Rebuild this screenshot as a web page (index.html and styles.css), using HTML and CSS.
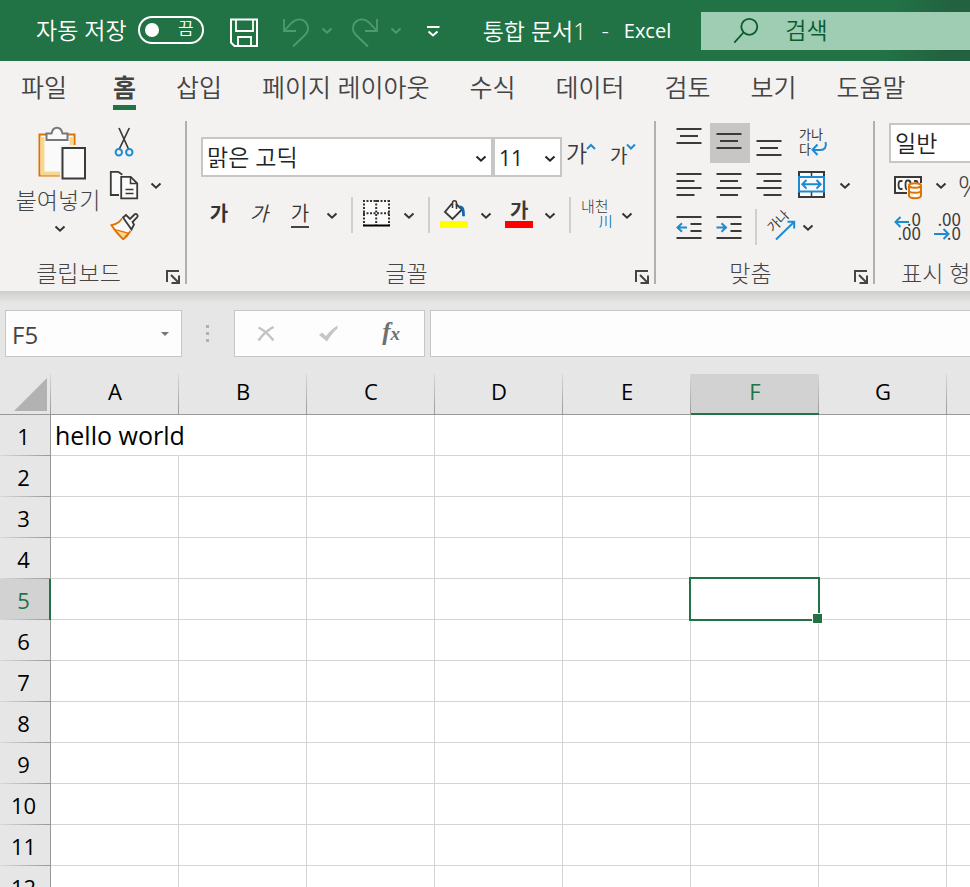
FILE: index.html
```html
<!DOCTYPE html>
<html lang="ko">
<head>
<meta charset="utf-8">
<title>통합 문서1 - Excel</title>
<link rel="stylesheet" href="styles.css">
</head>
<body>
<svg class="defs" aria-hidden="true">
  <symbol id="chev" viewBox="0 0 12 8"><path d="M1.500 1.500 6 5.700l4.500-4.200" fill="none" stroke="currentColor" stroke-width="2"/></symbol>
  <symbol id="launch" viewBox="0 0 14 14"><path d="M1 12V1h12" fill="none" stroke="#444" stroke-width="2"/><path d="M5 5l7 7M13 5.500V13H5.500" fill="none" stroke="#444" stroke-width="2"/></symbol>
</svg>

<header class="titlebar">
  <label class="autosave" for="autosave">자동 저장</label>
  <span class="switch">
    <input type="checkbox" role="switch" id="autosave">
    <span class="switch-state">끔</span>
  </span>
  <button class="tb-btn save" aria-label="저장">
    <svg width="28" height="29" viewBox="230 18 28 29" fill="none" stroke="#fff" stroke-width="2"><path d="M231 19.500h26V46H234.500L231 42.500z"/><path d="M236 20v11h17V20M238 46v-9h13v9" stroke-width="1.800"/></svg>
  </button>
  <button class="tb-btn undo" aria-label="실행 취소">
    <svg width="28" height="30" viewBox="282 18 28 30" fill="none" stroke="#4f9a70" stroke-width="1.800"><path d="M284 19v12h12M284.500 30.500l7.500-8c4-4 10-4 13.500-.5s3.500 9 0 12.500L293 46.500"/></svg>
  </button>
  <button class="tb-btn tb-chev dim" aria-label="실행 취소 목록"><svg width="12" height="8"><use href="#chev"/></svg></button>
  <button class="tb-btn redo" aria-label="다시 실행">
    <svg width="28" height="30" viewBox="351 18 28 30" fill="none" stroke="#4f9a70" stroke-width="1.800"><path d="M377 19v12h-12M376.500 30.500l-7.500-8c-4-4-10-4-13.500-.5s-3.500 9 0 12.500L368 46.500"/></svg>
  </button>
  <button class="tb-btn tb-chev dim" aria-label="다시 실행 목록"><svg width="12" height="8"><use href="#chev"/></svg></button>
  <button class="tb-btn customize" aria-label="빠른 실행 도구 모음 사용자 지정">
    <svg width="14" height="12" viewBox="426 25 14 12" fill="none" stroke="#fff" stroke-width="2"><path d="M427 27h12.500M428.500 31.500l4.500 4 4.500-4"/></svg>
  </button>
  <h1 class="doc-title"><span>통합 문서1</span><span>-</span><span>Excel</span></h1>
  <label class="search">
    <svg width="26" height="28" viewBox="733 17 26 28" fill="none" stroke="#0a5a2c" stroke-width="1.800"><circle cx="749.300" cy="26.800" r="8"/><path d="M743.500 32.500 734.300 42.600"/></svg>
    <input type="search" placeholder="검색" aria-label="검색">
  </label>
</header>

<nav class="tabs">
  <a href="#file">파일</a>
  <a href="#home" class="active" aria-current="page">홈</a>
  <a href="#insert">삽입</a>
  <a href="#layout">페이지 레이아웃</a>
  <a href="#formulas">수식</a>
  <a href="#data">데이터</a>
  <a href="#review">검토</a>
  <a href="#view">보기</a>
  <a href="#help">도움말</a>
</nav>

<section class="ribbon" aria-label="홈">
  <div class="group clipboard">
    <div class="group-body">
      <button class="paste">
        <svg class="pic" width="50" height="56" viewBox="37 126 50 56"><path d="M39.500 135.500h35v41h-35z" fill="#fafafa" stroke="#e07200" stroke-width="2"/><path d="M42.500 138v36.500H61M71.500 138v9" fill="none" stroke="#f8d88e" stroke-width="4"/><path d="M60 146h27v36H60z" fill="#f3f2f1"/><path d="M46.500 134.500h5c.8-3.800 2.800-5.700 5.500-5.700s4.700 1.900 5.500 5.700h5v6.500h-21z" fill="#fafafa" stroke="#777" stroke-width="2"/><path d="M62.500 149h22.500v30.500H62.500z" fill="#fafafa" stroke="#3b3a39" stroke-width="2"/></svg>
        <span>붙여넣기</span>
        <svg class="ch" width="12" height="8"><use href="#chev"/></svg>
      </button>
      <div class="rows">
        <div class="row">
          <button class="ib" aria-label="잘라내기"><svg viewBox="104 123 40 40" fill="none"><path d="M119 128l9.500 21M129.300 128l-10 21" stroke="#3b3a39" stroke-width="1.700"/><circle cx="118.800" cy="152.300" r="3.200" stroke="#1e8bd1" stroke-width="2"/><circle cx="129.300" cy="152.300" r="3.200" stroke="#1e8bd1" stroke-width="2"/></svg></button>
        </div>
        <div class="row">
          <button class="ib" aria-label="복사"><svg viewBox="104 165 40 40" stroke="#3b3a39" stroke-width="1.800" fill="none"><path d="M119 195h-8.200v-23.200h7.500l4 3" fill="#fafafa"/><path d="M121.200 176.800h9.500l6.500 6.500v15h-16z" fill="#fafafa"/><path d="M130.500 177v6.500h6.700M125.500 189.500h8M125.500 193.500h8" stroke-width="1.500"/></svg></button>
          <button class="cb" aria-label="복사 옵션"><svg width="12" height="8"><use href="#chev"/></svg></button>
        </div>
        <div class="row">
          <button class="ib" aria-label="서식 복사"><svg viewBox="104 207 40 40" fill="none"><path d="M122 218.500l-3 3.500c-2.200 1.800-4.700 2.600-7.500 3.200 3.500 5.500 7.300 10.200 11.700 14 2.700-1.700 5-4.300 7.300-8.200" fill="#fafafa" stroke="#e07200" stroke-width="1.800"/><path d="M114.500 229.500c4 .8 8 2.500 13.500 3.500l-4.800 6z" fill="#f8d88e" stroke="#e07200" stroke-width="1.200"/><path d="M123 217.500l3-2.500 4 4 4.500-4.500c1.800-1.600 4.300.8 2.700 2.700l-4.700 4.800 1.500 2.500-2.500 5z" fill="#fafafa" stroke="#3b3a39" stroke-width="1.800"/></svg></button>
        </div>
      </div>
    </div>
    <div class="group-foot"><span>클립보드</span><button aria-label="클립보드 옵션"><svg width="14" height="14"><use href="#launch"/></svg></button></div>
  </div>

  <div class="group font">
    <div class="group-body stack">
      <div class="row fonts">
        <span class="combo face"><select aria-label="글꼴"><option>맑은 고딕</option></select><svg width="12" height="8"><use href="#chev"/></svg></span>
        <span class="combo size"><select aria-label="글꼴 크기"><option>11</option></select><svg width="12" height="8"><use href="#chev"/></svg></span>
        <button class="ib" aria-label="글꼴 크기 크게"><svg viewBox="562 137 40 40"><text x="566" y="162" class="k23">가</text><path d="M587 149l4-4 4 4" fill="none" stroke="#1e8bd1" stroke-width="2"/></svg></button>
        <button class="ib" aria-label="글꼴 크기 작게"><svg viewBox="602 137 40 40"><text x="610" y="163" class="k19">가</text><path d="M627 144.500l4 4 4-4" fill="none" stroke="#1e8bd1" stroke-width="2"/></svg></button>
      </div>
      <div class="row">
        <button class="ib txt bold">가</button>
        <button class="ib txt italic">가</button>
        <button class="ib txt under"><span>가</span></button>
        <button class="cb" aria-label="밑줄 옵션"><svg width="12" height="8"><use href="#chev"/></svg></button>
        <span class="sep"></span>
        <button class="ib" aria-label="테두리"><svg viewBox="357 195 40 40"><path d="M364 201h25v24h-25z" fill="#fafafa"/><path d="M363 201h27M363 213.300h27" stroke="#333" stroke-width="2" stroke-dasharray="2 1.500" fill="none"/><path d="M364 200v25M376.200 200v25M389 200v25" stroke="#333" stroke-width="2" stroke-dasharray="2 1.500"/><path d="M363 225.500h27" stroke="#000" stroke-width="2"/></svg></button>
        <button class="cb" aria-label="테두리 옵션"><svg width="12" height="8"><use href="#chev"/></svg></button>
        <span class="sep"></span>
        <button class="ib" aria-label="채우기 색"><svg viewBox="434 195 40 40"><path d="M452 203.500l-7 8.500 7.500 7 9.500-9.500-6-5.500" fill="#fafafa" stroke="#3b3a39" stroke-width="1.900"/><path d="M452.500 208v-5c0-3 4-3 4 0v6" fill="none" stroke="#3b3a39" stroke-width="1.600"/><path d="M459.500 206.800c3.200 0 4 2 4 9.500" fill="none" stroke="#0f68b5" stroke-width="2.800"/><path d="M440 221h28v7h-28z" fill="#ff0"/></svg></button>
        <button class="cb" aria-label="채우기 색 옵션"><svg width="12" height="8"><use href="#chev"/></svg></button>
        <button class="ib" aria-label="글꼴 색"><svg viewBox="498 195 40 40"><text x="510" y="218" class="k20b">가</text><path d="M505 221h28v7h-28z" fill="red"/></svg></button>
        <button class="cb" aria-label="글꼴 색 옵션"><svg width="12" height="8"><use href="#chev"/></svg></button>
        <span class="sep"></span>
        <button class="ib" aria-label="윗주 필드"><svg viewBox="575 195 40 40"><text x="581" y="212" class="k15">내천</text><path d="M601.500 216v6.500c0 2.500-.5 4-1.800 5M606 216v10M610.500 215v13" fill="none" stroke="#3993cc" stroke-width="1.300"/></svg></button>
        <button class="cb" aria-label="윗주 옵션"><svg width="12" height="8"><use href="#chev"/></svg></button>
      </div>
    </div>
    <div class="group-foot"><span>글꼴</span><button aria-label="글꼴 옵션"><svg width="14" height="14"><use href="#launch"/></svg></button></div>
  </div>

  <div class="group align">
    <div class="group-body">
      <div class="rows">
        <div class="row">
          <button class="ib ln" aria-label="위쪽 맞춤"><svg viewBox="670 123 40 40"><path d="M676.500 129h25M680 136h18M676.500 143h25"/></svg></button>
          <button class="ib ln on" aria-label="가운데 맞춤" aria-pressed="true"><svg viewBox="710 123 40 40"><path d="M716.500 134h25M720 141h18M716.500 148h25"/></svg></button>
          <button class="ib ln" aria-label="아래쪽 맞춤"><svg viewBox="750 123 40 40"><path d="M756.500 141h25M760 148h18M756.500 155h25"/></svg></button>
          <button class="ib" aria-label="자동 줄 바꿈"><svg viewBox="790 123 40 40"><text x="799" y="139" class="k13">가나</text><text x="799" y="154" class="k13">다</text><path d="M825.500 142c1.500 5-1 8-5 8h-7M817.500 144.500l-5 5.300 5 5.200" fill="none" stroke="#1e8bd1" stroke-width="2"/></svg></button>
        </div>
        <div class="row">
          <button class="ib ln" aria-label="왼쪽 맞춤"><svg viewBox="670 165 40 40"><path d="M676.500 174h25M676.500 181h18M676.500 188h25M676.500 195h18"/></svg></button>
          <button class="ib ln" aria-label="가로 가운데 맞춤"><svg viewBox="710 165 40 40"><path d="M716.500 174h25M720 181h18M716.500 188h25M720 195h18"/></svg></button>
          <button class="ib ln" aria-label="오른쪽 맞춤"><svg viewBox="750 165 40 40"><path d="M756.500 174h25M763.500 181h18M756.500 188h25M763.500 195h18"/></svg></button>
          <button class="ib" aria-label="병합하고 가운데 맞춤"><svg viewBox="790 165 40 40" fill="none"><path d="M799 172h25v25h-25z" fill="#fafafa" stroke="#3b3a39" stroke-width="2"/><path d="M811.500 172v25" stroke="#3b3a39" stroke-width="1.500"/><path d="M799 177h25v14.500h-25z" fill="#fafafa" stroke="#1e8bd1" stroke-width="2"/><path d="M803 184.300h17.500M806.500 180l-4.200 4.300 4.200 4.300M816.500 180l4.200 4.300-4.200 4.300" stroke="#1e8bd1" stroke-width="2"/></svg></button>
          <button class="cb wide" aria-label="병합 옵션"><svg width="12" height="8"><use href="#chev"/></svg></button>
        </div>
        <div class="row">
          <button class="ib ln" aria-label="내어쓰기"><svg viewBox="670 207 40 40"><path d="M676.500 217h25M690.500 224h11M690.500 231h11M676.500 238h25"/><path d="M687 227.500h-9M682 223.200l-4.500 4.300 4.500 4.300" class="blue"/></svg></button>
          <button class="ib ln" aria-label="들여쓰기"><svg viewBox="710 207 40 40"><path d="M716.500 217h25M730.500 224h11M730.500 231h11M716.500 238h25"/><path d="M716.500 227.500h9M721.500 223.200l4.500 4.300-4.500 4.300" class="blue"/></svg></button>
          <span class="sep tight"></span>
          <button class="ib" aria-label="방향"><svg viewBox="760 207 40 40"><text x="773" y="233" class="k13" transform="rotate(-45 773 233)">가나</text><path d="M776 239.500l18-17.500M787.500 221.800h6.700v6.700" fill="none" stroke="#1e8bd1" stroke-width="2"/></svg></button>
          <button class="cb narrow" aria-label="방향 옵션"><svg width="12" height="8"><use href="#chev"/></svg></button>
        </div>
      </div>
    </div>
    <div class="group-foot"><span>맞춤</span><button aria-label="맞춤 옵션"><svg width="14" height="14"><use href="#launch"/></svg></button></div>
  </div>

  <div class="group number">
    <div class="group-body">
      <div class="rows">
        <div class="row"><span class="combo format"><select aria-label="표시 형식"><option>일반</option></select></span></div>
        <div class="row">
          <button class="ib" aria-label="회계 표시 형식"><svg viewBox="889 165 40 40" fill="none"><path d="M895 177h26v16h-26z" stroke="#3b3a39" stroke-width="2" fill="#fafafa"/><path d="M902.500 181h-2c-2 0-2 2-2 4s0 4 2 4h2M910 190c-4 0-4.500-1-4.500-5s.5-4.500 2.500-4.500 2.500.5 2.500 2.500M914 181h2c1.500 0 1.500 1 1.500 2" stroke="#3b3a39" stroke-width="1.800"/><path d="M907 183h16v17h-16z" fill="#f3f2f1"/><path d="M909 186v9.500c0 3.500 12 3.500 12 0V186" fill="#fafafa" stroke="#e07200" stroke-width="2"/><ellipse cx="915" cy="185.500" rx="6" ry="2.300" fill="#fafafa" stroke="#e07200" stroke-width="2"/><path d="M909 190.500c0 3 12 3 12 0" stroke="#e07200" stroke-width="2"/></svg></button>
          <button class="cb" aria-label="회계 옵션"><svg width="12" height="8"><use href="#chev"/></svg></button>
          <button class="percent" aria-label="백분율 스타일">%</button>
        </div>
        <div class="row">
          <button class="ib" aria-label="자릿수 늘림"><svg viewBox="889 207 40 40"><text x="921" y="226" class="num">.0</text><text x="921" y="240" class="num">.00</text><path d="M909 222h-13M900.500 217l-5 5 5 5" fill="none" stroke="#1e8bd1" stroke-width="2"/></svg></button>
          <button class="ib" aria-label="자릿수 줄임"><svg viewBox="929 207 40 40"><text x="961" y="226" class="num">.00</text><text x="961" y="240" class="num">.0</text><path d="M934 234h13M943.500 229l5 5-5 5" fill="none" stroke="#1e8bd1" stroke-width="2"/></svg></button>
        </div>
      </div>
    </div>
    <div class="group-foot"><span>표시 형식</span></div>
  </div>
</section>

<section class="formula-bar" aria-label="수식 입력줄">
  <div class="box name-box">
    <input type="text" value="F5" aria-label="이름 상자">
    <svg width="8" height="4" viewBox="0 0 8 4"><path d="M0 0h8L4 4z" fill="#777"/></svg>
  </div>
  <svg class="grip" width="3" height="17" viewBox="0 0 3 17" fill="#b0b0b0"><path d="M0 0h3v3H0zM0 7h3v3H0zM0 14h3v3H0z"/></svg>
  <div class="box fx-box">
    <button aria-label="취소"><svg width="18" height="16" viewBox="257 325 18 16" fill="none" stroke="#c3c3c3"><path d="M258.500 326.500c6 3 11 8 15 13" stroke-width="2.500"/><path d="M273.500 326c-6 3-11 8-15 13.500" stroke-width="2.500"/></svg></button>
    <button aria-label="입력"><svg width="20" height="17" viewBox="320 325 20 17"><path d="M320 335l3-2.500 4 3.500c3-4 7-8 11.500-10.500v3c-4 3.500-7.500 8-10.500 13z" fill="#c6c6c6"/></svg></button>
    <button class="fx" aria-label="함수 삽입">f<span>x</span></button>
  </div>
  <input class="box formula" type="text" aria-label="수식">
</section>

<main class="sheet">
  <table>
    <colgroup><col class="c-head"><col span="9" class="c-cell"></colgroup>
    <thead>
      <tr><th class="corner"><svg width="33" height="33" viewBox="0 0 33 33"><path d="M33 0v33H0z" fill="#b2b2b2"/></svg></th><th>A</th><th>B</th><th>C</th><th>D</th><th>E</th><th class="sel">F</th><th>G</th><th></th><th></th></tr>
    </thead>
    <tbody>
      <tr><th>1</th><td class="spill">hello world</td><td></td><td></td><td></td><td></td><td></td><td></td><td></td><td></td></tr>
      <tr><th>2</th><td></td><td></td><td></td><td></td><td></td><td></td><td></td><td></td><td></td></tr>
      <tr><th>3</th><td></td><td></td><td></td><td></td><td></td><td></td><td></td><td></td><td></td></tr>
      <tr><th>4</th><td></td><td></td><td></td><td></td><td></td><td></td><td></td><td></td><td></td></tr>
      <tr><th class="sel">5</th><td></td><td></td><td></td><td></td><td></td><td class="cursor"></td><td></td><td></td><td></td></tr>
      <tr><th>6</th><td></td><td></td><td></td><td></td><td></td><td></td><td></td><td></td><td></td></tr>
      <tr><th>7</th><td></td><td></td><td></td><td></td><td></td><td></td><td></td><td></td><td></td></tr>
      <tr><th>8</th><td></td><td></td><td></td><td></td><td></td><td></td><td></td><td></td><td></td></tr>
      <tr><th>9</th><td></td><td></td><td></td><td></td><td></td><td></td><td></td><td></td><td></td></tr>
      <tr><th>10</th><td></td><td></td><td></td><td></td><td></td><td></td><td></td><td></td><td></td></tr>
      <tr><th>11</th><td></td><td></td><td></td><td></td><td></td><td></td><td></td><td></td><td></td></tr>
      <tr><th>12</th><td></td><td></td><td></td><td></td><td></td><td></td><td></td><td></td><td></td></tr>
    </tbody>
  </table>
</main>
</body>
</html>
```
FILE: styles.css
```css
* { box-sizing: border-box; }

body {
  margin: 0;
  height: 100vh;
  display: flex;
  flex-direction: column;
  overflow: hidden;
  background: #e6e6e6;
  color: #444;
  font-family: "Open Sans", "Noto Sans CJK KR", sans-serif;
  font-size: 23px;
  font-weight: 350;
}

button, input, select {
  font: inherit;
  color: inherit;
  border: 0;
  padding: 0;
  margin: 0;
  background: none;
  border-radius: 0;
}
button { display: flex; align-items: center; justify-content: center; }
svg { display: block; flex: none; }
.defs { position: absolute; width: 0; height: 0; }

/* Title bar */
.titlebar {
  flex: none;
  height: 61px;
  display: flex;
  align-items: center;
  padding-left: 36px;
  color: #fff;
  background: linear-gradient(100deg, transparent 70%, #236240 90%) right / 280px 100% no-repeat #217346;
}
.autosave { white-space: nowrap; padding-bottom: 4px; }
.switch {
  position: relative;
  width: 66px;
  height: 28px;
  margin: 0 26px 2px 11px;
}
.switch input {
  appearance: none;
  display: flex;
  align-items: center;
  width: 100%;
  height: 100%;
  padding-left: 5px;
  border: 2px solid #fff;
  border-radius: 14px;
}
.switch input::before {
  content: "";
  width: 14px;
  height: 14px;
  border-radius: 50%;
  background: #fff;
}
.switch-state {
  position: absolute;
  right: 10px;
  top: 1px;
  font-size: 17px;
  line-height: 24px;
  pointer-events: none;
}
.save { margin: 4px 24px 0 0; }
.undo, .redo { margin-top: 4px; }
.tb-chev { width: 34px; }
.undo + .tb-chev { margin-right: 7px; }
.dim { color: #4f9a70; }
.customize { margin: 0 43px 0 13px; }
.doc-title {
  margin: 0;
  display: flex;
  align-items: center;
  gap: 15px;
  font: inherit;
  white-space: nowrap;
  padding-bottom: 2px;
}
.doc-title span:last-child { font-size: 20px; font-weight: 400; padding-top: 2px; }
.search {
  flex: 1;
  min-width: 0;
  height: 38px;
  margin-left: 30px;
  padding-left: 32px;
  display: flex;
  align-items: center;
  gap: 26px;
  background: #9fcdb3;
  color: #0a5a2c;
}
.search input { flex: 1; min-width: 0; outline: 0; padding-bottom: 2px; }
.search input::placeholder { color: #0a5a2c; opacity: 1; }

/* Tabs */
.tabs {
  flex: none;
  height: 51px;
  display: flex;
  gap: 40px;
  padding-left: 21px;
  background: #f3f2f1;
  font-size: 25px;
  white-space: nowrap;
}
.tabs a {
  height: 49px;
  line-height: 52px;
  color: #444;
  text-decoration: none;
}
.tabs a:first-child { margin-right: 6px; }
.tabs .active {
  font-weight: 600;
  background: linear-gradient(#217346, #217346) bottom / 100% 5px no-repeat;
}

/* Ribbon */
.ribbon {
  flex: none;
  display: flex;
  padding: 9px 0 7px;
  background: #f3f2f1;
  overflow: hidden;
}
.group {
  flex: none;
  display: flex;
  flex-direction: column;
  justify-content: space-between;
  height: 163px;
  border-right: 2px solid #b1b0af;
}
.group-body { display: flex; padding: 2px 13px 0 14px; }
.group-foot { display: flex; align-items: flex-end; height: 28px; padding-right: 5px; }
.group-foot span { flex: 1; text-align: center; line-height: 22px; white-space: nowrap; font-weight: 300; }
.group-foot button { margin-left: 9px; }
.rows { display: flex; flex-direction: column; gap: 2px; }
.row { display: flex; align-items: center; height: 40px; }
.ib { width: 40px; height: 40px; flex: none; }
.ib svg { width: 40px; height: 40px; }
.cb { width: 24px; height: 40px; padding-top: 2px; flex: none; color: #333; }
.cb.wide { width: 30px; }
.cb.narrow { width: 16px; }
.sep { width: 2px; height: 36px; margin: 0 4px 0 7px; background: #d0cfce; }
.sep.tight { margin: 0 3px 0 5px; }
.on { background: #c8c6c4; }
.ln svg { stroke: #3b3a39; stroke-width: 2; fill: none; }
.ln .blue { stroke: #1e8bd1; }

.clipboard .group-body { padding-left: 17px; padding-right: 17px; gap: 5px; }
.paste { width: 82px; flex-direction: column; justify-content: flex-start; padding-top: 2px; font-weight: 300; }
.paste .pic { margin-left: 8px; }
.paste span { line-height: 38px; white-space: nowrap; }
.paste .ch { margin: 6px 0 0 4px; color: #333; }

.font .group-body { padding: 16px 12px 0 13px; }
.stack { flex-direction: column; gap: 18px; }
.fonts { padding-left: 1px; }
.combo {
  position: relative;
  height: 40px;
  border: 2px solid #c6c6c6;
  background: #fff;
  color: #222;
}
.combo select { appearance: none; width: 100%; height: 36px; padding-left: 4px; outline: 0; }
.combo svg { position: absolute; right: 4px; top: 16px; pointer-events: none; }
.face { width: 292px; }
.size { width: 69px; }
.size select { font-size: 21px; font-weight: 400; padding-top: 2px; }
.format { width: 180px; }

.txt { font-size: 20px; color: #333; padding: 0 2px 5px 0; }
.bold { font-weight: 700; }
.italic { font-style: italic; }
.under { padding: 0; }
.under span { line-height: 24px; border-bottom: 2px solid #444; }

svg text { fill: #3b3a39; font-weight: 400; }
.k23 { font-size: 23px; font-weight: 350; }
.k19 { font-size: 19px; }
.k20b { font-size: 20px; font-weight: 700; }
.k15 { font-size: 15px; font-weight: 300; }
.k13 { font-size: 13px; }
.num { font-family: "Noto Sans CJK KR", sans-serif; font-size: 17px; text-anchor: end; }

.number { border-right: 0; }
.percent { font-size: 30px; font-weight: 300; padding-left: 5px; }
.number .group-foot span { padding-left: 26px; text-align: left; }

/* Formula bar */
.formula-bar {
  flex: none;
  display: flex;
  align-items: center;
  height: 83px;
  padding: 2px 0 0 5px;
  background: linear-gradient(#cfcecd, #e6e6e6 12px);
}
.box { height: 47px; background: #fdfdfd; border: 1px solid #c6c6c6; }
.name-box { display: flex; align-items: center; width: 177px; padding: 0 12px 0 6px; font-size: 24px; font-weight: 400; }
.name-box input { flex: 1; min-width: 0; outline: 0; padding-top: 2px; }
.grip { margin: 0 25px 0 24px; }
.fx-box { display: flex; align-items: center; justify-content: space-between; width: 191px; padding: 0 24px 0 22px; }
.fx { font: italic 700 25px "Liberation Serif", serif; color: #707070; padding-bottom: 4px; }
.fx span { font-size: 19px; padding-top: 5px; }
.formula { flex: 1; min-width: 0; margin-left: 5px; padding: 0 8px; border-right: 0; outline: 0; }

/* Sheet */
.sheet { flex: 1; min-height: 0; overflow: hidden; }
table { width: 1203px; table-layout: fixed; border-collapse: separate; border-spacing: 0; color: #000; font-size: 25px; }
.c-head { width: 51px; }
.c-cell { width: 128px; }
th, td { height: 41px; padding: 0; line-height: 32px; font-weight: 400; }
th { font-size: 22px; background: #e6e6e6; }
td { background: #fff; border-right: 1px solid #d4d4d4; border-bottom: 1px solid #d4d4d4; }
thead th {
  border-bottom: 1px solid #999;
  padding-bottom: 7px;
  background: linear-gradient(#d8d8d8, #999) right / 1px 100% no-repeat #e6e6e6;
}
tbody th {
  border-right: 1px solid #999;
  padding-right: 3px;
  background: linear-gradient(90deg, #d8d8d8, #999) bottom / 100% 1px no-repeat #e6e6e6;
}
thead .corner { padding-bottom: 0; }
.corner svg { margin-left: 14px; }
thead .sel { color: #217346; background-color: #d2d2d2; border-bottom: 2px solid #217346; padding-bottom: 6px; }
tbody .sel { color: #217346; background-color: #d2d2d2; border-right: 2px solid #217346; padding-right: 2px; }
.spill { padding-left: 4px; white-space: nowrap; border-right-color: transparent; }
.cursor { position: relative; }
.cursor::before {
  content: "";
  position: absolute;
  inset: -2px;
  border: 2px solid #217346;
}
.cursor::after {
  content: "";
  position: absolute;
  right: -5px;
  bottom: -5px;
  width: 9px;
  height: 9px;
  border: 1px solid #fff;
  background: #217346;
}
```
